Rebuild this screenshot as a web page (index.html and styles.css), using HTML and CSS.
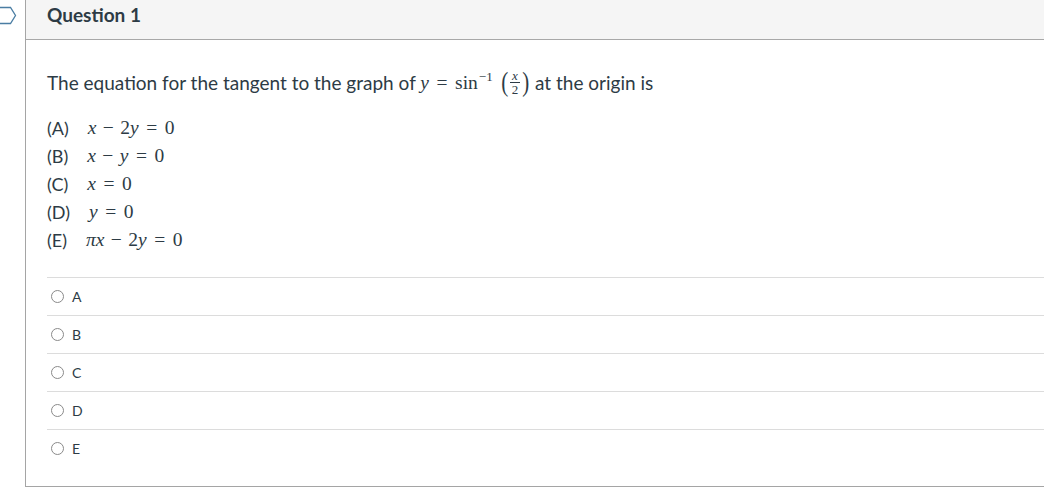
FILE: index.html
```html
<!DOCTYPE html>
<html>
<head>
<meta charset="utf-8">
<link rel="stylesheet" href="styles.css">
</head>
<body>
<div class="page">
  <div class="rail">
    <svg class="flag" width="18" height="20" viewBox="0 0 18 20"><path d="M-4 1.5 H10.5 L15.5 9.5 L10.5 17.5 H-4" fill="none" stroke="#4a7da3" stroke-width="1.3"/></svg>
  </div>
  <div class="card">
    <div class="head">Question 1</div>
    <div class="body">
      <p class="prompt">The equation for the tangent to the graph of <span class="m"><i>y</i><span class="op rel">=</span>sin<sup>−1</sup></span><span class="pgroup"><span class="paren">(</span><span class="frac"><span class="num">x</span><span class="den">2</span></span><span class="paren">)</span></span> at the origin is</p>
      <div class="choices">
        <div class="choice"><span class="lbl">(A)</span><span class="m"><i>x</i><span class="op bin">−</span>2<i>y</i><span class="op rel">=</span>0</span></div>
        <div class="choice"><span class="lbl">(B)</span><span class="m"><i>x</i><span class="op bin">−</span><i>y</i><span class="op rel">=</span>0</span></div>
        <div class="choice"><span class="lbl">(C)</span><span class="m"><i>x</i><span class="op rel">=</span>0</span></div>
        <div class="choice"><span class="lbl">(D)</span><span class="m"><i>y</i><span class="op rel">=</span>0</span></div>
        <div class="choice"><span class="lbl">(E)</span><span class="m"><i>πx</i><span class="op bin">−</span>2<i>y</i><span class="op rel">=</span>0</span></div>
      </div>
      <div class="answers">
        <label class="ans"><span class="radio"></span>A</label>
        <label class="ans"><span class="radio"></span>B</label>
        <label class="ans"><span class="radio"></span>C</label>
        <label class="ans"><span class="radio"></span>D</label>
        <label class="ans"><span class="radio"></span>E</label>
      </div>
    </div>
  </div>
</div>
</body>
</html>
```
FILE: styles.css
```css
html, body { margin: 0; padding: 0; background: #fff; overflow: hidden; }
body { font-family: Lato, "Liberation Sans", sans-serif; color: #2d3b45; }
.page { display: flex; width: 1060px; }
.rail { width: 25px; flex: none; padding-top: 6px; }
.flag { display: block; }
.card { flex: 1; border-left: 1px solid #a5a5a5; border-bottom: 1px solid #a5a5a5; height: 487px; box-sizing: border-box; }
.head { height: 40px; box-sizing: border-box; background: #f5f5f5; border-bottom: 1px solid #a8a8a8; padding-left: 21px; font-size: 19px; font-weight: 700; line-height: 30px; }
.body { padding: 0 0 0 21px; }
.prompt { margin: 0; padding-top: 35px; height: 50px; box-sizing: border-box; font-size: 19px; line-height: 28px; display: flex; align-items: center; white-space: pre; }
.m { font-family: "Liberation Serif", "Times New Roman", serif; font-size: 19.5px; white-space: nowrap; }
.m i { font-style: italic; }
.op { display: inline-block; width: 0.78em; text-align: center; font-style: normal; }
.bin { margin: 0 0.22em; }
.rel { margin: 0 0.28em; }
.m sup { font-size: 13px; vertical-align: 8px; line-height: 0; margin-left: 1px; }
.pgroup { display: inline-flex; align-items: center; margin-left: 7px; }
.paren { font-family: "Liberation Serif", serif; font-size: 28px; line-height: 1; display: inline-block; transform: scaleX(0.75); position: relative; top: -1px; }
.frac { display: inline-flex; flex-direction: column; align-items: center; font-family: "Liberation Serif", serif; font-size: 13px; line-height: 11px; margin: 0 1px; }
.frac .num { font-style: italic; border-bottom: 1px solid #2d3b45; padding: 0 2px 1px; }
.frac .den { padding-top: 1px; }
.choices { padding-top: 24px; }
.choice { height: 28px; display: flex; align-items: center; font-size: 18px; }
.lbl { margin-right: 19px; }
.answers { margin-top: 23px; }
.ans { display: flex; align-items: center; height: 37px; border-top: 1px solid #dcdcdc; font-size: 14px; gap: 8px; padding-left: 4px; }
.radio { width: 11px; height: 11px; border: 1px solid #8a8a8a; border-radius: 50%; }
```
